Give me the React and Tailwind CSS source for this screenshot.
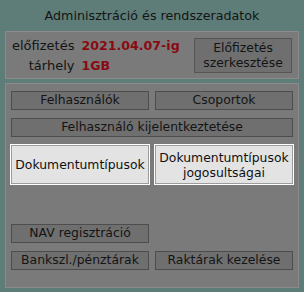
import React from 'react';

const font = { fontFamily: '"DejaVu Sans", Verdana, sans-serif' };

const DarkBtn = ({ children, className = '' }) => (
  <button className={`h-[19px] border border-[#4d4d4d] bg-[#6f6f6f] text-[12.4px] leading-none text-[#141414] ${className}`}>
    {children}
  </button>
);

const LightBtn = ({ children }) => (
  <button className="h-[41px] border border-white bg-[#e3e3e3] text-[12.4px] leading-[15px] text-[#111] shadow-[inset_0_0_0_1px_#9c9c9c]">
    {children}
  </button>
);

export default function App() {
  return (
    <div className="w-[304px] h-[292px] bg-[#5e7d79] px-[5px] flex flex-col" style={font}>
      <div className="h-[31px] flex items-center justify-center text-[12.7px] text-[#141414]">
        Adminisztráció és rendszeradatok
      </div>

      {/* subscription */}
      <div className="h-[48px] border border-[#8b8b8b] bg-[#7a7a7a] flex items-center pl-[6px] pr-[6px]">
        <div className="flex-1">
          <div className="grid grid-cols-[auto_auto] justify-start items-baseline gap-x-[7px] gap-y-[5px] leading-[15px]">
            <span className="text-right text-[13px] text-[#141414]">előfizetés</span>
            <span className="font-bold text-[12.6px] text-[#8a0a12]">2021.04.07-ig</span>
            <span className="text-right text-[13px] text-[#141414]">tárhely</span>
            <span className="font-bold text-[12.6px] text-[#8a0a12]">1GB</span>
          </div>
        </div>
        <button className="w-[98px] h-[35px] border border-[#555] bg-[#6f6f6f] text-[12.4px] leading-[15px] text-[#141414]">
          Előfizetés<br />szerkesztése
        </button>
      </div>

      {/* actions */}
      <div className="mt-[4px] h-[205px] border border-[#8b8b8b] bg-[#7a7a7a] px-[5px] pt-[7px] flex flex-col">
        <div className="grid grid-cols-2 gap-x-[6px]">
          <DarkBtn>Felhasználók</DarkBtn>
          <DarkBtn>Csoportok</DarkBtn>
        </div>
        <DarkBtn className="mt-[8px] w-full">Felhasználó kijelentkeztetése</DarkBtn>
        <div className="mt-[7px] grid grid-cols-2 gap-x-[4px] -mx-[1px]">
          <LightBtn>Dokumentumtípusok</LightBtn>
          <LightBtn>
            Dokumentumtípusok<br />jogosultságai
          </LightBtn>
        </div>
        <div className="mt-[39px] grid grid-cols-2 gap-x-[6px]">
          <DarkBtn>NAV regisztráció</DarkBtn>
        </div>
        <div className="mt-[8px] grid grid-cols-2 gap-x-[6px]">
          <DarkBtn>Bankszl./pénztárak</DarkBtn>
          <DarkBtn>Raktárak kezelése</DarkBtn>
        </div>
      </div>
    </div>
  );
}
